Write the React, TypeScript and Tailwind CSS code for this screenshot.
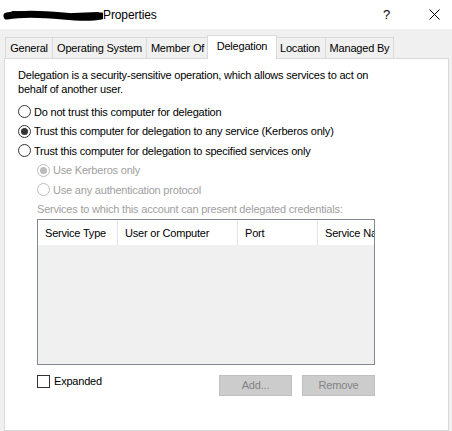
import React from "react";

const tabs = [
  { label: "General", w: "w-[48px]" },
  { label: "Operating System", w: "w-[95px]" },
  { label: "Member Of", w: "w-[63px]" },
  { label: "Delegation", w: "w-[70px]", active: true },
  { label: "Location", w: "w-[52px]" },
  { label: "Managed By", w: "w-[69px]" },
];

const Radio = ({ checked, disabled }: { checked?: boolean; disabled?: boolean }) => (
  <span
    className={`flex h-[13px] w-[13px] shrink-0 items-center justify-center rounded-full border bg-white ${
      disabled ? "border-[#bcbcbc]" : "border-[#333333]"
    }`}
  >
    {checked && (
      <span className={`h-[7px] w-[7px] rounded-full ${disabled ? "bg-[#bcbcbc]" : "bg-[#333333]"}`} />
    )}
  </span>
);

const App = () => {
  return (
    <div className="flex h-[431px] w-[452px] flex-col overflow-hidden bg-[#f0f0f0] font-['Liberation_Sans',Arial,sans-serif] text-[11px] tracking-[-0.2px] text-black">
      {/* Title bar */}
      <div className="flex h-[29px] shrink-0 items-center bg-white">
        <svg width="100" height="20" viewBox="0 0 100 20" className="ml-[3px] shrink-0">
          <path d="M4 11 C 20 8, 40 9, 60 11 S 88 13, 98 11" stroke="#000" strokeWidth="7" fill="none" strokeLinecap="round" />
          <path d="M10 8 L 30 9 M 70 10 L 95 9" stroke="#000" strokeWidth="4" fill="none" strokeLinecap="round" />
        </svg>
        <span className="text-[12px] tracking-[-0.1px]">Properties</span>
        <span className="ml-auto mr-[39px] text-[13px] font-light">?</span>
        <svg width="11" height="11" viewBox="0 0 11 11" className="mr-[12px]">
          <path d="M0.5 0.5 L10.5 10.5 M10.5 0.5 L0.5 10.5" stroke="#000" strokeWidth="1" />
        </svg>
      </div>

      {/* Tabs */}
      <div className="mt-[6px] flex h-[23px] shrink-0 items-end pl-[5px]">
        {tabs.map((t) =>
          t.active ? (
            <div
              key={t.label}
              className={`relative z-10 -mx-[2px] -mb-px flex h-[24px] items-center justify-center border border-b-0 border-[#d9d9d9] bg-white pb-[3px] ${t.w}`}
            >
              {t.label}
            </div>
          ) : (
            <div
              key={t.label}
              className={`-ml-px flex h-[21px] items-center justify-center border border-b-0 border-[#d9d9d9] bg-[#f0f0f0] first:ml-0 ${t.w}`}
            >
              {t.label}
            </div>
          )
        )}
      </div>

      {/* Panel */}
      <div className="ml-[4px] flex w-[445px] flex-1 flex-col border border-[#d9d9d9] bg-white pl-[13px] pt-[9px]">
        <p className="leading-[14px]">
          Delegation is a security-sensitive operation, which allows services to act on
          <br />
          behalf of another user.
        </p>

        <div className="mt-[6px] flex h-[19.5px] items-center gap-[3px]">
          <Radio />
          <span>Do not trust this computer for delegation</span>
        </div>
        <div className="flex h-[19.5px] items-center gap-[3px]">
          <Radio checked />
          <span>Trust this computer for delegation to any service (Kerberos only)</span>
        </div>
        <div className="flex h-[19.5px] items-center gap-[3px]">
          <Radio />
          <span>Trust this computer for delegation to specified services only</span>
        </div>
        <div className="flex h-[19.5px] items-center gap-[3px] pl-[19px] text-[#a0a0a0]">
          <Radio checked disabled />
          <span>Use Kerberos only</span>
        </div>
        <div className="flex h-[19.5px] items-center gap-[3px] pl-[19px] text-[#a0a0a0]">
          <Radio disabled />
          <span>Use any authentication protocol</span>
        </div>
        <div className="flex h-[19.5px] items-center pl-[19px] text-[#a0a0a0]">
          Services to which this account can present delegated credentials:
        </div>

        {/* List */}
        <div className="ml-[19px] flex h-[146px] w-[338px] flex-col overflow-hidden border border-[#828790] bg-[#f0f0f0]">
          <div className="flex h-[25px] shrink-0 bg-white pt-px">
            <div className="flex w-[80px] shrink-0 items-center border-r border-[#e5e5e5] pl-[7px]">Service Type</div>
            <div className="flex w-[120px] shrink-0 items-center border-r border-[#e5e5e5] pl-[7px]">User or Computer</div>
            <div className="flex w-[80px] shrink-0 items-center border-r border-[#e5e5e5] pl-[7px]">Port</div>
            <div className="flex min-w-0 flex-1 items-center overflow-hidden whitespace-nowrap pl-[7px]">Service Name</div>
          </div>
        </div>

        {/* Bottom row */}
        <div className="ml-[19px] mt-[10px] flex w-[338px] items-start justify-between">
          <div className="flex h-[13px] items-center gap-[4px]">
            <span className="h-[13px] w-[13px] shrink-0 border border-[#333333] bg-white" />
            <span>Expanded</span>
          </div>
          <div className="flex gap-[10px]">
            <div className="flex h-[21px] w-[73px] items-center justify-center border border-[#bfbfbf] bg-[#cccccc] text-[#838383]">
              Add...
            </div>
            <div className="flex h-[21px] w-[73px] items-center justify-center border border-[#bfbfbf] bg-[#cccccc] text-[#838383]">
              Remove
            </div>
          </div>
        </div>
      </div>
    </div>
  );
};

export default App;
